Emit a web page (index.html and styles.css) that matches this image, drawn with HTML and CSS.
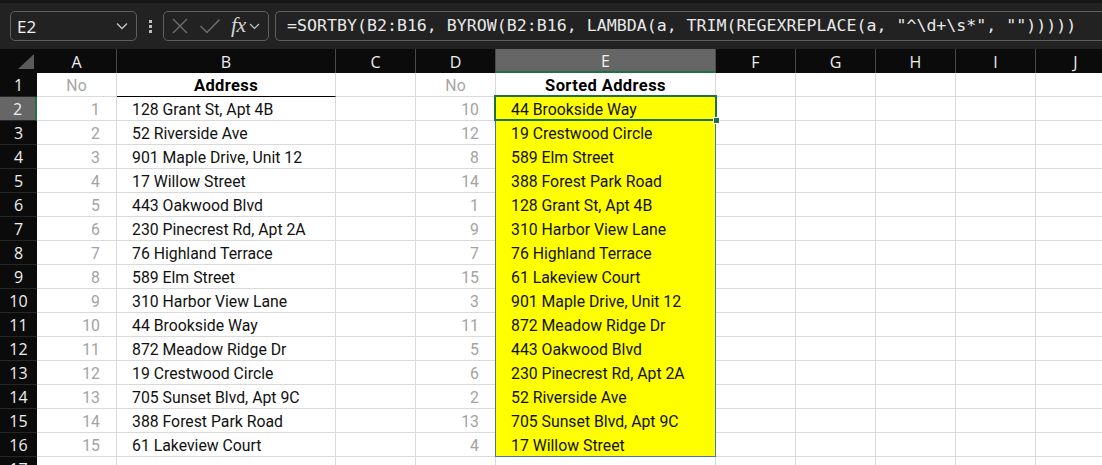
FILE: index.html
```html
<!DOCTYPE html>
<html>
<head>
<meta charset="utf-8">
<link rel="stylesheet" href="styles.css">
</head>
<body>
<div class="app">
  <div class="topstrip"></div>
  <div class="fbar">
    <div class="namebox">
      <span class="nb-text">E2</span>
      <svg class="chev" width="12" height="8" viewBox="0 0 12 8"><polyline points="1,1.5 6,6.5 11,1.5" fill="none" stroke="#c8c8c8" stroke-width="1.3"/></svg>
    </div>
    <div class="vdots"><span></span><span></span><span></span></div>
    <div class="fbtns">
      <svg class="ico-x" width="18" height="18" viewBox="0 0 18 18"><path d="M2 2 L16 16 M16 2 L2 16" stroke="#6e6e6e" stroke-width="1.4" fill="none"/></svg>
      <svg class="ico-ok" width="22" height="18" viewBox="0 0 22 18"><polyline points="1.5,9 8,15.5 20.5,2.5" stroke="#6e6e6e" stroke-width="1.4" fill="none"/></svg>
      <span class="fx">fx</span>
      <svg class="chev2" width="11" height="7" viewBox="0 0 11 7"><polyline points="1,1 5.5,5.5 10,1" fill="none" stroke="#c8c8c8" stroke-width="1.2"/></svg>
    </div>
    <div class="formula">=SORTBY(B2:B16, BYROW(B2:B16, LAMBDA(a, TRIM(REGEXREPLACE(a, "^\d+\s*", "")))))</div>
  </div>
  <div class="sheet">
    <div class="grid">
      <div class="ch corner"><span class="tri"></span></div>
      <div class="ch">A</div><div class="ch">B</div><div class="ch">C</div><div class="ch">D</div><div class="ch ch-sel">E</div><div class="ch">F</div><div class="ch">G</div><div class="ch">H</div><div class="ch">I</div><div class="ch">J</div><div class="ch"></div>

      <div class="rh">1</div><div class="c ctr gry">No</div><div class="c ctr hd ul">Address</div><div class="c"></div><div class="c ctr gry">No</div><div class="c ctr hd">Sorted Address</div><div class="c"></div><div class="c"></div><div class="c"></div><div class="c"></div><div class="c"></div><div class="c"></div>

      <div class="rh rh-sel">2</div><div class="c num">1</div><div class="c txt">128 Grant St, Apt 4B</div><div class="c"></div><div class="c num">10</div><div class="c txt y">44 Brookside Way</div><div class="c"></div><div class="c"></div><div class="c"></div><div class="c"></div><div class="c"></div><div class="c"></div>

      <div class="rh">3</div><div class="c num">2</div><div class="c txt">52 Riverside Ave</div><div class="c"></div><div class="c num">12</div><div class="c txt y">19 Crestwood Circle</div><div class="c"></div><div class="c"></div><div class="c"></div><div class="c"></div><div class="c"></div><div class="c"></div>

      <div class="rh">4</div><div class="c num">3</div><div class="c txt">901 Maple Drive, Unit 12</div><div class="c"></div><div class="c num">8</div><div class="c txt y">589 Elm Street</div><div class="c"></div><div class="c"></div><div class="c"></div><div class="c"></div><div class="c"></div><div class="c"></div>

      <div class="rh">5</div><div class="c num">4</div><div class="c txt">17 Willow Street</div><div class="c"></div><div class="c num">14</div><div class="c txt y">388 Forest Park Road</div><div class="c"></div><div class="c"></div><div class="c"></div><div class="c"></div><div class="c"></div><div class="c"></div>

      <div class="rh">6</div><div class="c num">5</div><div class="c txt">443 Oakwood Blvd</div><div class="c"></div><div class="c num">1</div><div class="c txt y">128 Grant St, Apt 4B</div><div class="c"></div><div class="c"></div><div class="c"></div><div class="c"></div><div class="c"></div><div class="c"></div>

      <div class="rh">7</div><div class="c num">6</div><div class="c txt">230 Pinecrest Rd, Apt 2A</div><div class="c"></div><div class="c num">9</div><div class="c txt y">310 Harbor View Lane</div><div class="c"></div><div class="c"></div><div class="c"></div><div class="c"></div><div class="c"></div><div class="c"></div>

      <div class="rh">8</div><div class="c num">7</div><div class="c txt">76 Highland Terrace</div><div class="c"></div><div class="c num">7</div><div class="c txt y">76 Highland Terrace</div><div class="c"></div><div class="c"></div><div class="c"></div><div class="c"></div><div class="c"></div><div class="c"></div>

      <div class="rh">9</div><div class="c num">8</div><div class="c txt">589 Elm Street</div><div class="c"></div><div class="c num">15</div><div class="c txt y">61 Lakeview Court</div><div class="c"></div><div class="c"></div><div class="c"></div><div class="c"></div><div class="c"></div><div class="c"></div>

      <div class="rh">10</div><div class="c num">9</div><div class="c txt">310 Harbor View Lane</div><div class="c"></div><div class="c num">3</div><div class="c txt y">901 Maple Drive, Unit 12</div><div class="c"></div><div class="c"></div><div class="c"></div><div class="c"></div><div class="c"></div><div class="c"></div>

      <div class="rh">11</div><div class="c num">10</div><div class="c txt">44 Brookside Way</div><div class="c"></div><div class="c num">11</div><div class="c txt y">872 Meadow Ridge Dr</div><div class="c"></div><div class="c"></div><div class="c"></div><div class="c"></div><div class="c"></div><div class="c"></div>

      <div class="rh">12</div><div class="c num">11</div><div class="c txt">872 Meadow Ridge Dr</div><div class="c"></div><div class="c num">5</div><div class="c txt y">443 Oakwood Blvd</div><div class="c"></div><div class="c"></div><div class="c"></div><div class="c"></div><div class="c"></div><div class="c"></div>

      <div class="rh">13</div><div class="c num">12</div><div class="c txt">19 Crestwood Circle</div><div class="c"></div><div class="c num">6</div><div class="c txt y">230 Pinecrest Rd, Apt 2A</div><div class="c"></div><div class="c"></div><div class="c"></div><div class="c"></div><div class="c"></div><div class="c"></div>

      <div class="rh">14</div><div class="c num">13</div><div class="c txt">705 Sunset Blvd, Apt 9C</div><div class="c"></div><div class="c num">2</div><div class="c txt y">52 Riverside Ave</div><div class="c"></div><div class="c"></div><div class="c"></div><div class="c"></div><div class="c"></div><div class="c"></div>

      <div class="rh">15</div><div class="c num">14</div><div class="c txt">388 Forest Park Road</div><div class="c"></div><div class="c num">13</div><div class="c txt y">705 Sunset Blvd, Apt 9C</div><div class="c"></div><div class="c"></div><div class="c"></div><div class="c"></div><div class="c"></div><div class="c"></div>

      <div class="rh">16</div><div class="c num">15</div><div class="c txt">61 Lakeview Court</div><div class="c"></div><div class="c num">4</div><div class="c txt y">17 Willow Street</div><div class="c"></div><div class="c"></div><div class="c"></div><div class="c"></div><div class="c"></div><div class="c"></div>

      <div class="rh">17</div><div class="c"></div><div class="c"></div><div class="c"></div><div class="c"></div><div class="c"></div><div class="c"></div><div class="c"></div><div class="c"></div><div class="c"></div><div class="c"></div><div class="c"></div>
    </div>
    <div class="spill"></div>
    <div class="selbox"><span class="handle"></span></div>
  </div>
</div>
</body>
</html>
```

FILE: styles.css
```css
* { box-sizing: border-box; }
html, body { margin: 0; padding: 0; }
body {
  width: 1102px;
  height: 465px;
  overflow: hidden;
  background: #ffffff;
  font-family: "Open Sans", "Noto Sans", sans-serif;
}
.app { width: 1102px; height: 465px; overflow: hidden; }

.topstrip {
  height: 3px;
  background: #161616;
}
.fbar {
  height: 46px;
  background: #222222;
  display: flex;
  align-items: flex-start;
  padding: 8px 0 0 10px;
  white-space: nowrap;
}
.namebox {
  width: 127px;
  height: 30px;
  border: 1px solid #5e5e5e;
  border-radius: 5px;
  display: flex;
  align-items: center;
  justify-content: space-between;
  padding: 0 8px 0 6px;
  flex: none;
}
.nb-text {
  color: #f2f2f2;
  font-family: "Open Sans", sans-serif;
  font-size: 17px;
}
.chev { display: block; }
.vdots {
  width: 26px;
  height: 30px;
  display: flex;
  flex-direction: column;
  align-items: center;
  justify-content: center;
  gap: 2px;
  flex: none;
}
.vdots span {
  width: 3px;
  height: 3px;
  background: #bdbdbd;
  display: block;
}
.fbtns {
  width: 106px;
  height: 30px;
  border: 1px solid #5e5e5e;
  border-radius: 5px;
  display: flex;
  align-items: center;
  padding: 0 0 0 7px;
  flex: none;
}
.ico-x { display: block; margin-right: 10px; }
.ico-ok { display: block; margin-right: 10px; }
.fx {
  font-family: "Liberation Serif", serif;
  font-style: italic;
  font-size: 22px;
  color: #d4d4d4;
  line-height: 20px;
  margin-top: -3px;
  letter-spacing: -0.5px;
}
.chev2 { display: block; margin-left: 3px; }
.formula {
  margin-left: 6px;
  height: 30px;
  width: 900px;
  flex: none;
  border: 1px solid #5e5e5e;
  border-right: none;
  border-radius: 5px 0 0 5px;
  padding: 0 0 0 11px;
  color: #e8e8e8;
  font-family: "DejaVu Sans Mono", monospace;
  font-size: 16.6px;
  line-height: 28px;
  overflow: hidden;
}

.sheet {
  position: relative;
}
.grid {
  display: grid;
  grid-template-columns: 37px 80px 219px 80px 80px 220px 80px 80px 80px 80px 80px 1fr;
  grid-auto-rows: 24px;
}
.ch {
  background: #0b0b0b;
  color: #eeeeee;
  font-family: "Open Sans", sans-serif;
  font-size: 16px;
  display: flex;
  align-items: center;
  justify-content: center;
  border-right: 1px solid #4a4a4a;
  padding-top: 1px;
}
.ch-sel {
  background: #666666;
  border-bottom: 2px solid #1e7145;
  color: #f2f2f2;
}
.corner {
  position: relative;
  border-right: none;
}
.tri {
  position: absolute;
  right: 3px;
  bottom: 4px;
  width: 0;
  height: 0;
  border-left: 16px solid transparent;
  border-bottom: 15px solid #5a5a5a;
}
.rh {
  background: #0b0b0b;
  color: #eeeeee;
  font-family: "Open Sans", sans-serif;
  font-size: 16px;
  display: flex;
  align-items: center;
  justify-content: center;
  border-bottom: 1px solid #262626;
  padding-top: 1px;
}
.rh-sel {
  background: #666666;
  border-right: 2px solid #1e7145;
}
.c {
  background: #ffffff;
  border-right: 1px solid #dadada;
  border-bottom: 1px solid #dadada;
  font-family: "Roboto", sans-serif;
  font-size: 15.8px;
  color: #111111;
  display: flex;
  align-items: center;
  white-space: nowrap;
  padding-top: 2px;
}
.ctr { justify-content: center; }
.gry { color: #a6a6a6; }
.hd { font-weight: 700; color: #000; font-size: 16.5px; letter-spacing: 0.4px; }
.ul { border-bottom: 1px solid #000000; }
.num {
  justify-content: flex-end;
  padding-right: 16px;
  color: #a3a3a3;
}
.txt { padding-left: 15px; }
.y {
  background: #ffff00;
  border-bottom-color: #ffff00;
}

.spill {
  position: absolute;
  left: 495px;
  top: 47px;
  width: 221px;
  height: 361px;
  border: 1px solid #4472c4;
  pointer-events: none;
}
.selbox {
  position: absolute;
  left: 494px;
  top: 46px;
  width: 223px;
  height: 26px;
  border: 2px solid #1e7145;
  pointer-events: none;
}
.handle {
  position: absolute;
  right: -5px;
  bottom: -5px;
  width: 7px;
  height: 7px;
  background: #1e7145;
  border: 1px solid #ffffff;
}
```
